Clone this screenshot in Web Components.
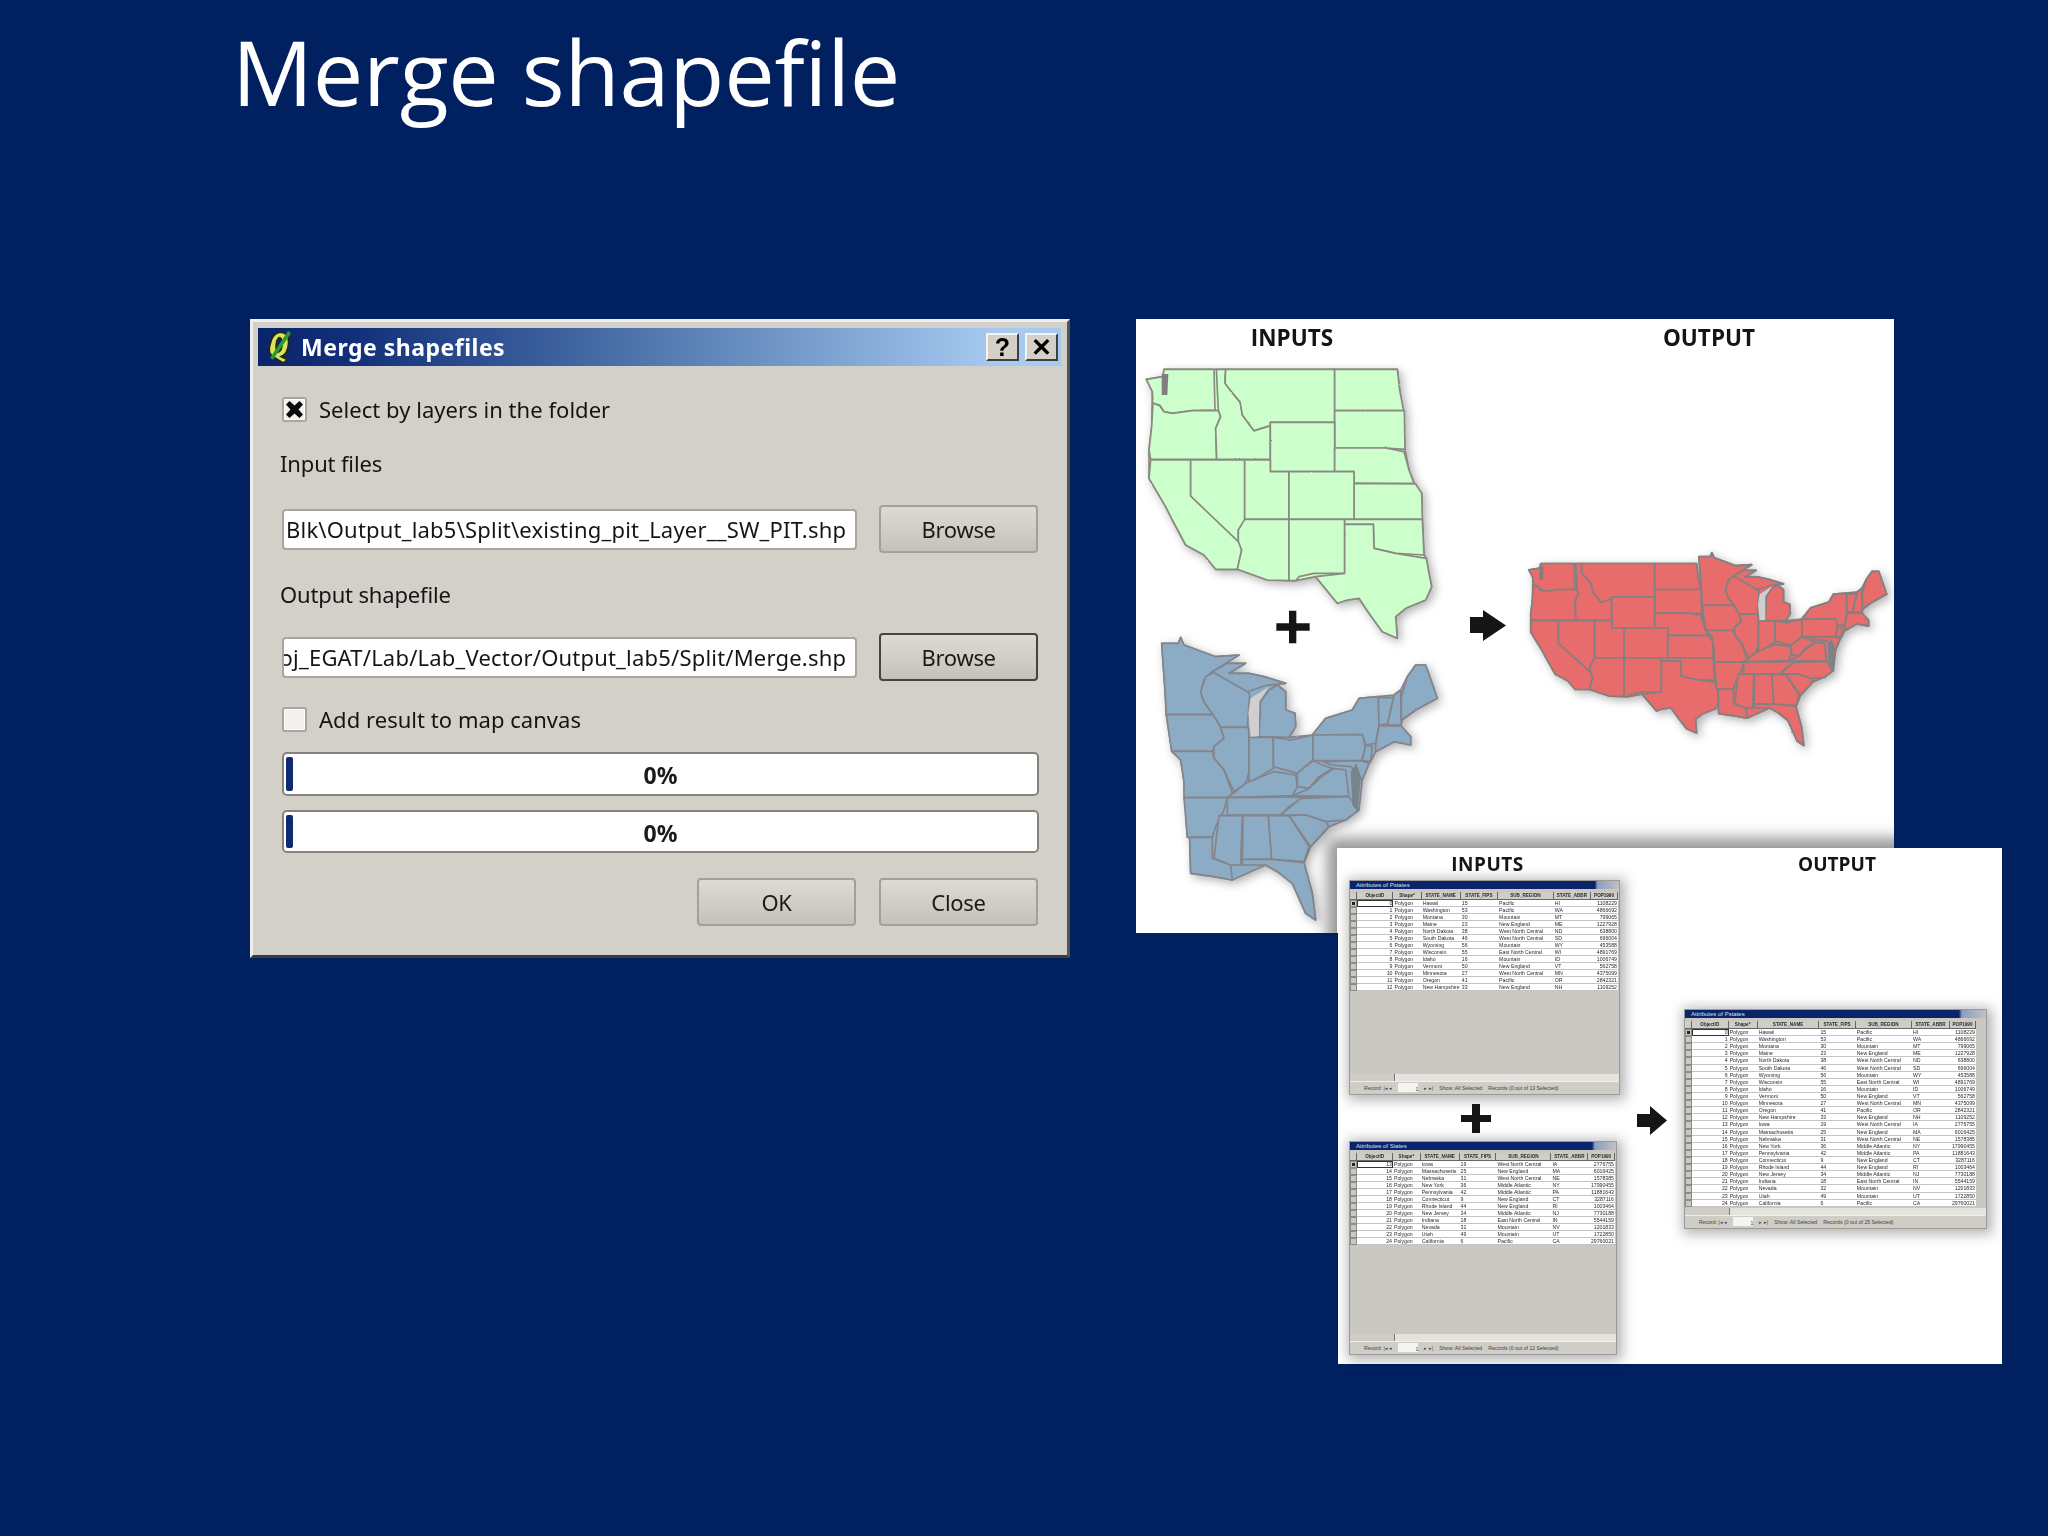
<!DOCTYPE html>
<html><head><meta charset="utf-8"><title>Merge shapefile</title>
<style>
html,body{margin:0;padding:0;background:#002060;}
</style></head>
<body>
<slide-frame>
  <span slot="title">Merge shapefile</span>
  <qgis-dialog slot="dialog" heading="Merge shapefiles"></qgis-dialog>
  <map-figure slot="maps"></map-figure>
  <table-figure slot="tables"></table-figure>
</slide-frame>
<script>
const UI='"Noto Sans","Open Sans",sans-serif';
function el(name,css,html){
  customElements.define(name,class extends HTMLElement{
    constructor(){super();const r=this.attachShadow({mode:'open'});
      const h=typeof html==='function'?html(this):html;
      r.innerHTML=`<style>${css}</style>${h}`;}
  });
}
el('slide-frame',`
:host{display:block;position:relative;width:2048px;height:1536px;background:#002060;overflow:hidden;font-family:${UI}}
h1{margin:0;height:319px;box-sizing:border-box;padding:12px 0 0 232px;font:400 90px/118px "Open Sans",sans-serif;color:#fff;letter-spacing:-.2px;filter:blur(.5px)}
.row{display:flex;align-items:flex-start;gap:66px;padding-left:250px}
.over{position:absolute;left:1338px;top:848px}
`,`<h1><slot name="title"></slot></h1><div class="row"><slot name="dialog"></slot><slot name="maps"></slot></div><div class="over"><slot name="tables"></slot></div>`);

el('dlg-button',`
:host{display:block;box-sizing:border-box;width:159px;height:48px;border:2px solid var(--edge,#a3a097);border-radius:4px;background:linear-gradient(#dddad3,#cfccc4 60%,#c4c1b9);
 font:22px/44px ${UI};color:#1a1a1a;text-align:center;letter-spacing:-.3px}
`,`<slot></slot>`);

el('dlg-check',`
:host{display:flex;align-items:center;gap:12px;height:25px;font:22px/25px ${UI};color:#141414;letter-spacing:.04px}
i{display:block;box-sizing:border-box;width:25px;height:25px;background:#f2f1ee;border:2px solid #a9a69e;border-radius:3px;box-shadow:inset 0 0 0 1px #fff}
svg{display:block;width:21px;height:21px}
`,h=>`<i>${h.hasAttribute('checked')?'<svg viewBox="0 0 21 21"><path d="M2 5.500 L5.500 2 L10.500 6.500 L15.500 2 L19 5.500 L14.500 10.500 L19 15.500 L15.500 19 L10.500 14.500 L5.500 19 L2 15.500 L6.500 10.500 Z" fill="#0a0a0a"/></svg>':''}</i><span><slot></slot></span>`);

el('dlg-path',`
:host{display:flex;align-items:center;gap:22px}
.f{box-sizing:border-box;width:576px;height:41px;background:#fff;border:2px solid #a9a69e;border-radius:4px;display:flex;justify-content:flex-end;align-items:center;overflow:hidden;padding-right:9px;
 font:22px/37px ${UI};color:#151515;white-space:nowrap;letter-spacing:.2px}
`,`<div class="f"><slot></slot></div><slot name="btn"></slot>`);

el('dlg-progress',`
:host{display:block;box-sizing:border-box;width:757px;height:44px;background:#fff;border:2px solid #85837c;border-radius:5px;position:relative;font:700 23px/42px ${UI};color:#1a1a1a;text-align:center}
b{position:absolute;left:2px;top:3px;bottom:3px;width:7px;background:#0f2a72;border-radius:2px}
`,`<b></b><slot></slot>`);

el('qgis-dialog',`
:host{display:block;box-sizing:border-box;width:820px;height:639px;background:#d2d0c8;border:3px solid;border-color:#efeee9 #565650 #3c3c3a #efeee9;padding:6px 6px 0 5px;filter:blur(.55px)}
.tb{display:flex;align-items:center;height:38px;background:linear-gradient(90deg,#0a246a 0%,#12307a 12%,#4a70a8 45%,#a6caf0 92%);padding-left:8px;color:#fff;font:700 23px/34px ${UI};letter-spacing:.5px}
.tb svg{width:27px;height:34px;margin-right:8px;flex:none}
.tb span{flex:1}
.cb{box-sizing:border-box;width:33px;height:28px;background:#d4d0c8;border:2px solid;border-color:#f5f4f0 #404040 #404040 #f5f4f0;margin-right:6px;display:flex;align-items:center;justify-content:center;font:700 25px/24px "Liberation Sans",sans-serif;color:#000;letter-spacing:0}
.cb:last-child{margin-right:3px}
.b{padding:0 23px 0 24px}
.l{height:28px;margin-left:-2px;font:22px/26px ${UI};color:#141414;letter-spacing:-.15px}
.bt{display:flex;justify-content:flex-end;gap:23px}
.c2{margin-top:26px}
`,h=>`
<div class="tb"><svg viewBox="0 0 25 32"><path d="M5 9 Q8 2 14 2 Q22 3 21 13 Q20 23 14 25 L20 28 L16 31 L8 26 Q2 24 3 16 Z M10 10 Q8 19 11 21 Q15 20 15 12 Q15 7 12 7 Z" fill="#dbe25e" stroke="#1d2a10" stroke-width="1.500"/><path d="M5 27 L22 2" stroke="#2f9a2c" stroke-width="3.400" fill="none"/></svg><span>${h.getAttribute('heading')}</span><div class="cb">?</div><div class="cb">✕</div></div>
<div class="b">
<dlg-check checked style="margin-top:31px">Select by layers in the folder</dlg-check>
<div class="l" style="margin-top:28px">Input files</div>
<dlg-path style="margin-top:27px">Blk\\Output_lab5\\Split\\existing_pit_Layer__SW_PIT.shp<dlg-button slot="btn">Browse</dlg-button></dlg-path>
<div class="l" style="margin-top:28px">Output shapefile</div>
<dlg-path style="margin-top:24px">Proj_EGAT/Lab/Lab_Vector/Output_lab5/Split/Merge.shp<dlg-button slot="btn" style="--edge:#45443f">Browse</dlg-button></dlg-path>
<dlg-check class="c2">Add result to map canvas</dlg-check>
<dlg-progress style="margin-top:20px">0%</dlg-progress>
<dlg-progress style="margin-top:14px;height:43px">0%</dlg-progress>
<div class="bt" style="margin-top:25px"><dlg-button>OK</dlg-button><dlg-button>Close</dlg-button></div>
</div>`);

const WEST=[
"22,58 72,50 75,28 225,28 228,150 160,152 100,160 75,155 62,135 42,130 40,95",
"42,130 62,137 75,155 100,160 160,152 238,152 245,170 230,205 233,298 35,298 30,270 38,200",
"232,28 260,28 258,70 285,105 305,130 310,165 345,212 394,197 394,298 233,298 230,205 245,170 238,150",
"260,28 587,28 587,187 394,187 394,197 345,212 310,165 303,125 280,98 258,70",
"587,28 775,28 782,90 794,152 587,152",
"587,152 796,152 798,268 740,264 587,264",
"394,187 587,187 587,335 394,335",
"587,264 740,264 795,275 810,330 825,370 645,370 645,335 587,335",
"645,370 830,372 848,400 850,478 645,478",
"35,300 155,300 155,408 300,545 308,570 295,628 230,628 195,585 140,555 100,480 80,440 30,355",
"155,300 317,300 317,505 298,510 298,545 155,408",
"317,300 394,300 394,335 450,335 450,478 317,478",
"450,335 645,335 645,478 450,478",
"317,478 450,478 450,662 385,660 295,628 308,570 298,545 298,510",
"450,478 617,478 617,640 525,640 480,650 470,662 450,662",
"617,478 850,478 855,585 770,580 705,565 703,493 617,493",
"617,493 703,493 705,565 770,580 862,595 870,640 878,680 860,720 800,745 770,770 775,835 730,815 690,760 660,715 625,720 595,730 530,650 617,640"];
const WSIL="22,58 72,50 75,28 775,28 782,90 792,150 798,268 810,330 825,368 848,400 850,478 855,585 862,595 870,640 878,680 860,720 800,745 770,770 775,835 730,815 690,760 660,715 625,720 595,730 530,650 470,662 385,660 295,628 230,628 195,585 140,555 100,480 80,440 30,355 30,270 38,200 40,95";
const EAST=[
"38,40 88,40 95,22 105,45 160,65 200,80 270,75 230,100 190,125 165,150 155,185 165,215 192,254 52,254 48,180",
"170,140 195,125 290,170 302,195 295,292 215,292 192,254 165,215 155,185",
"190,125 235,100 290,100 240,130 300,130 345,140 410,160 355,165 310,180 295,185",
"335,215 360,180 385,165 410,185 410,240 438,250 440,290 420,322 330,320",
"52,254 192,254 215,292 225,325 195,350 190,364 68,364",
"215,292 298,292 300,320 300,425 290,460 255,485 225,420 195,385 195,350 225,325",
"300,322 373,322 373,415 300,460 300,425",
"373,322 425,330 492,315 492,390 445,430 373,410",
"68,364 190,364 195,385 225,420 250,490 235,503 105,503 105,455 95,390",
"250,492 290,460 373,425 440,435 445,470 430,497 235,503",
"445,430 492,392 520,405 550,415 510,440 480,475 445,470",
"430,497 480,476 515,442 555,415 590,420 600,500",
"235,503 600,500 455,507 420,530 395,555 235,555",
"455,505 600,500 630,540 590,570 530,575 470,555 395,555",
"105,503 235,503 225,540 200,590 190,622 115,622",
"122,622 190,622 190,685 245,705 250,750 195,740 125,730",
"210,557 280,557 275,705 245,705 195,685",
"282,557 358,557 368,688 285,688 280,705",
"358,557 420,557 480,650 465,695 368,688",
"420,557 470,555 530,575 540,590 485,650",
"280,688 368,688 465,698 490,790 500,870 470,850 430,760 385,725 350,705 280,705",
"492,313 640,313 650,350 638,392 492,392",
"490,315 530,265 610,240 630,205 688,200 690,285 680,340 650,345 640,313",
"688,203 735,203 715,282 690,285",
"735,195 755,180 757,285 715,285",
"757,200 775,140 800,105 830,105 865,205 800,240 757,270",
"690,288 757,288 785,320 785,345 735,335 680,365 680,345",
"650,345 670,350 665,395 640,392",
"520,395 638,392 660,400 640,450 605,410 550,405"];
const ESIL="38,40 88,40 95,22 105,45 160,65 200,80 270,75 230,100 290,100 240,130 300,130 345,140 410,160 355,165 385,165 410,185 410,240 438,250 440,290 420,322 490,315 530,265 610,240 630,205 685,200 735,195 755,180 775,140 800,105 830,105 865,205 800,240 760,270 755,290 785,320 785,345 735,335 680,365 665,395 660,400 640,450 630,540 590,570 540,590 485,650 465,700 490,790 500,870 470,850 430,760 385,725 350,705 250,750 195,740 125,730 122,625 115,620 108,505 105,455 95,390 68,362 52,255 48,180";
const polys=a=>a.map(p=>`<polygon points="${p}"/>`).join('');
const WEXTRA='<polygon points="68,42 88,42 85,105 68,105" fill="#7f7f7f" stroke="none"/>';
const EEXTRA='<polygon points="305,205 360,170 330,215 330,318 305,320 298,250" fill="#cfcfcf" stroke="none"/><polygon points="605,425 622,400 636,440 626,545 610,525" fill="#78848c" stroke="none"/>';
const THIRD='scale(.33333)';
const westG=`<polygon points="${WSIL}"/>${polys(WEST)}${WEXTRA}`;
const eastG=`<polygon points="${ESIL}"/>${polys(EAST)}${EEXTRA}`;
el('map-figure',`
:host{display:block;position:relative;width:758px;height:614px;background:#fff;overflow:hidden}
svg{display:block;width:758px;height:614px;filter:blur(.7px)}
text{font:700 22.500px "Open Sans",sans-serif;fill:#151515;text-anchor:middle}
.sh{position:absolute;left:201px;top:529px;width:700px;height:200px;box-shadow:0 0 14px 10px rgba(80,80,80,.6)}
`,`<svg viewBox="1137 319 758 614">
<defs>
<filter id="s" x="-10%" y="-10%" width="125%" height="125%" color-interpolation-filters="sRGB">
 <feTurbulence type="fractalNoise" baseFrequency=".5" numOctaves="1" seed="4" result="n"/>
 <feDisplacementMap in="SourceGraphic" in2="n" scale="1.600" xChannelSelector="R" yChannelSelector="G" result="d"/>
 <feGaussianBlur in="d" stdDeviation="5" result="b"/><feOffset in="b" dx="3" dy="3" result="o"/>
 <feFlood flood-color="#000" flood-opacity=".3"/><feComposite in2="o" operator="in" result="sh"/>
 <feMerge><feMergeNode in="sh"/><feMergeNode in="d"/></feMerge>
</filter></defs>
<text x="1293" y="346">INPUTS</text><text x="1710" y="346">OUTPUT</text>
<g filter="url(#s)">
 <g fill="#ccffcc" stroke="#8a8a80" stroke-width="5" stroke-linejoin="round" transform="translate(1140 360) ${THIRD}">${westG}</g>
</g>
<g filter="url(#s)">
 <g fill="#8cabc4" stroke="#84848a" stroke-width="5" stroke-linejoin="round" transform="translate(1150 630) ${THIRD}">${eastG}</g>
</g>
<g filter="url(#s)">
 <g fill="#e86c6c" stroke="#85807f" stroke-width="8" stroke-linejoin="round">
  <g transform="translate(763.5 330.8) scale(.668 .63) translate(1140 360) ${THIRD}">${westG}</g>
  <g transform="translate(908.2 117.6) scale(.681 .6825) translate(1150 630) ${THIRD}">${eastG}</g>
 </g>
</g>
<g transform="translate(1140 360) ${THIRD}"><path d="M450 752h22v38h40v22h-40v38h-22v-38h-38v-22h38z" fill="#151515"/></g>
<path d="M1471 617h13v-7l23 15.500-23 15.500v-8h-13z" fill="#151515"/>
</svg><div class="sh"></div>`);

const SUB={P:'Pacific',M:'Mountain',N:'New England',W:'West North Central',E:'East North Central',A:'Middle Atlantic'};
const ST=[[15,'Hawaii','P','HI','1108229'],[53,'Washington','P','WA','4866692'],[30,'Montana','M','MT','799065'],[23,'Maine','N','ME','1227928'],[38,'North Dakota','W','ND','638800'],[46,'South Dakota','W','SD','696004'],[56,'Wyoming','M','WY','453588'],[55,'Wisconsin','E','WI','4891769'],[16,'Idaho','M','ID','1006749'],[50,'Vermont','N','VT','562758'],[27,'Minnesota','W','MN','4375099'],[41,'Oregon','P','OR','2842321'],[33,'New Hampshire','N','NH','1109252'],[19,'Iowa','W','IA','2776755'],[25,'Massachusetts','N','MA','6016425'],[31,'Nebraska','W','NE','1578385'],[36,'New York','A','NY','17990455'],[42,'Pennsylvania','A','PA','11881643'],[9,'Connecticut','N','CT','3287116'],[44,'Rhode Island','N','RI','1003464'],[34,'New Jersey','A','NJ','7730188'],[18,'Indiana','E','IN','5544159'],[32,'Nevada','M','NV','1201833'],[49,'Utah','M','UT','1722850'],[6,'California','P','CA','29760021']];
el('attr-window',`
:host{display:block;box-sizing:border-box;background:#c9c8c3;box-shadow:2px 2px 12px 3px rgba(0,0,0,.3);font:5.200px/7px "Liberation Sans",sans-serif;color:#2a2a2a;overflow:hidden;filter:blur(.65px);border:1px solid #9a9a96}
.w{display:flex;flex-direction:column;height:100%}
.t{height:8px;flex:none;background:linear-gradient(90deg,#0a246a 0%,#0a246a 91%,#8d9cc0 92%,#c0c0c0);color:#d8e0f0;font-size:6px;line-height:8px;padding-left:6px}
.g{display:grid;grid-template-columns:var(--c);grid-template-rows:8px;grid-auto-rows:var(--r,7px);flex:none;padding-top:3px;padding-right:var(--pr,1px);background:linear-gradient(#c9c8c3 3px,transparent 3px)}
.h{background:#cfcdc6;font-weight:700;font-size:4.600px;text-align:center;line-height:7px;border-right:1px solid #666;border-bottom:1px solid #666;box-sizing:border-box;overflow:hidden;white-space:nowrap}
.c{background:#fff;border-bottom:1px solid #c4c4c4;box-sizing:border-box;padding-left:1px;overflow:hidden;white-space:nowrap}
.s{background:#c9c8c3;border:1px solid #8b8b87;box-sizing:border-box;position:relative}
.s.on::after{content:"";position:absolute;left:1px;top:1px;width:3px;height:3px;background:#222}
.c.sel{outline:1px solid #333;outline-offset:-1px}
.r{text-align:right;padding-right:1px}
.sp{flex:1}
.sb{height:7px;flex:none;background:#e4e3de}
.sb i{display:block;width:44px;height:100%;background:#cfcdc6;border-right:1px solid #777}
.f{height:13px;flex:none;display:flex;gap:6px;padding-left:14px;line-height:12px;background:#cfcdc6;color:#444;white-space:nowrap;border-top:1px solid #efefef;box-sizing:border-box}
.f u{display:inline-block;width:20px;height:9px;margin-top:1px;background:#f4f4f2;text-decoration:none;text-align:right}
`,h=>{
 const from=+h.getAttribute('from'),to=+h.getAttribute('to');
 const head=['','ObjectID','Shape*','STATE_NAME','STATE_FIPS','SUB_REGION','STATE_ABBR','POP1990'];
 let g=head.map(x=>`<div class="h">${x}</div>`).join('');
 ST.slice(from,to).forEach((s,i)=>{
  g+=`<div class="s${i?'':' on'}"></div><div class="c r${i?'':' sel'}">${i+from}</div><div class="c">Polygon</div><div class="c">${s[1]}</div><div class="c">${s[0]}</div><div class="c">${SUB[s[2]]}</div><div class="c">${s[3]}</div><div class="c r">${s[4]}</div>`;
 });
 return `<div class="w"><div class="t">${h.getAttribute('heading')}</div><div class="g">${g}</div><div class="sp"></div><div class="sb"><i></i></div>
 <div class="f"><span>Record: |◂ ◂</span><u>1</u><span>▸ ▸|</span><span>Show: All Selected</span><span>Records (0 out of ${to-from} Selected)</span></div></div>`;
});

el('table-figure',`
:host{display:grid;box-sizing:border-box;width:664px;height:516px;background:#fff;padding-left:11px;grid-template-columns:271px 64px 303px;grid-template-rows:32px 215px 46px 214px;}
.l{font:700 19px/32px "Open Sans",sans-serif;color:#151515;text-align:center;filter:blur(.5px)}
.i{grid-column:1;grid-row:2}
.p{grid-column:1;grid-row:3;display:flex;align-items:center;justify-content:center;padding-right:18px}
.a{grid-column:2;grid-row:2/5;align-self:center;justify-self:center;margin-top:5px;display:block}
.o{grid-column:3;grid-row:2/5;align-self:center;margin-top:3px}
svg{display:block;width:30px;height:29px;filter:blur(.5px)}
`,`<div class="l" style="margin-left:6px;letter-spacing:.5px">INPUTS</div><div></div><div class="l" style="margin-right:-3px">OUTPUT</div>
<attr-window class="i" style="--c:17fr 83fr 65fr 90fr 86fr 128fr 86fr 62fr;width:271px;height:215px" heading="Attributes of Pstates" from="0" to="13"></attr-window>
<div class="p"><svg viewBox="0 0 30 29"><path d="M11 0h8v11h11v7H19v11h-8V18H0v-7h11z" fill="#151515"/></svg></div>
<attr-window style="grid-column:1;grid-row:4;--c:17fr 83fr 65fr 90fr 86fr 128fr 86fr 62fr;width:268px;height:214px" heading="Attributes of States" from="13" to="25"></attr-window>
<svg class="a" viewBox="0 0 30 29"><path d="M0 8h13V0l17 14.500L13 29v-8H0z" fill="#151515"/></svg>
<attr-window class="o" style="--c:16fr 85fr 67fr 143fr 84fr 130fr 88fr 60fr;--pr:10px;--r:7.120px;width:303px;height:220px" heading="Attributes of Pstates" from="0" to="25"></attr-window>`);
</script>
</body></html>
